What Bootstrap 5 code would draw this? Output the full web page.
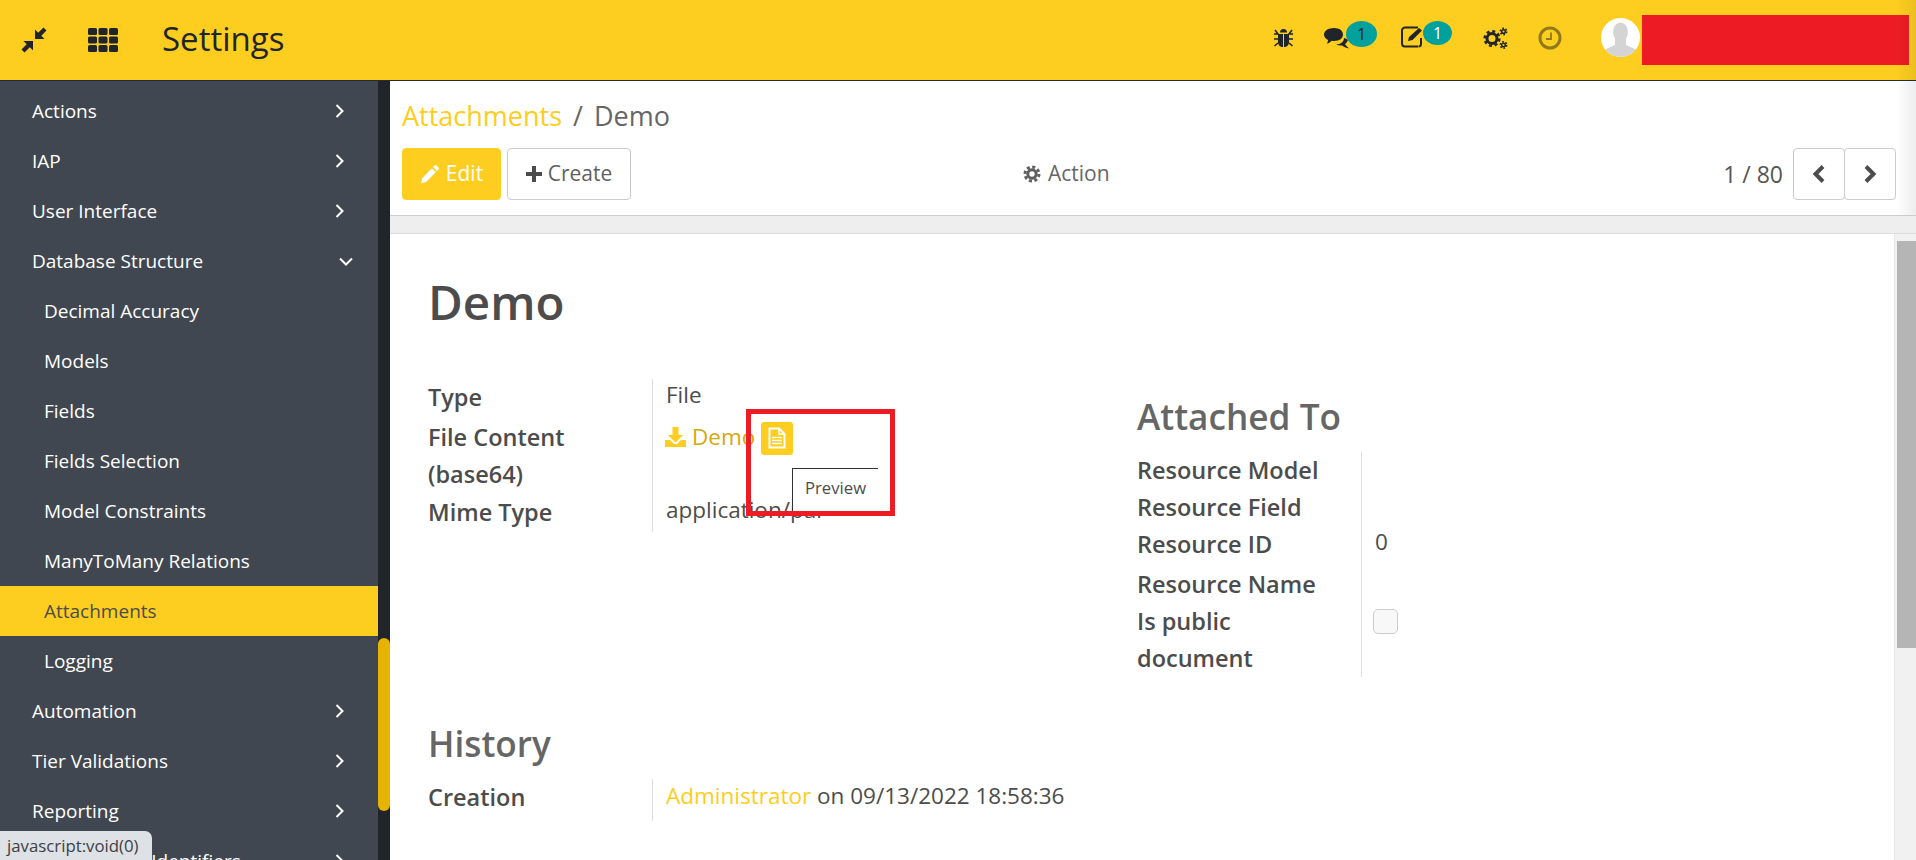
<!DOCTYPE html>
<html lang="en">
<head>
<meta charset="utf-8">
<title>Settings</title>
<link href="https://cdn.jsdelivr.net/npm/bootstrap@5.3.0/dist/css/bootstrap.min.css" rel="stylesheet">
<style>
html,body{height:860px;overflow:hidden}
body{font-family:"Open Sans","Noto Sans",sans-serif;font-size:22.5px;color:#4c4c4c;background:#fff}
.app-shell{position:relative;height:860px;width:1916px;overflow:hidden}
.top-bar{height:81px;background:#fdcd20;border-bottom:1px solid #1f2d3d;color:#212529}
.top-left{padding-left:21px}
.top-title{font-size:33px;line-height:78px;height:80px;margin-left:44px;color:#212529}
.ico-th{margin-left:41px}
.top-right{height:80px;padding-right:7px}
.t-bug{margin-top:28px}
.t-com{margin-top:28px;margin-left:30px;position:relative;width:26px;height:21px}
.t-edt{margin-top:26px;margin-left:51px;position:relative;width:24px;height:22px}
.t-gear{margin-top:27px;margin-left:58px}
.t-clock{margin-top:26px;margin-left:30px}
.t-ava{margin-top:18px;margin-left:39px}
.bub{position:absolute;background:#00a09d;border-radius:50%;color:#212529;font-size:16px;display:flex;align-items:center;justify-content:center}
.bub-a{left:22px;top:-7px;width:31px;height:26px}
.bub-b{left:22px;top:-5px;width:29px;height:24px;color:#fff}
.redact{background:#ed1c24;width:267px;height:50px;margin-left:2px;margin-top:15px}
.avatar-wrap{width:39px;height:39px;display:block}
.body-row{height:779px}
.side-menu{width:378px;background:#414750;padding-top:5px;overflow:hidden;flex:none}
.side-item{height:50px;display:flex;align-items:center;justify-content:space-between;padding-left:32px;padding-right:34px;color:#fff;font-size:19px;text-decoration:none}
.side-item.sub{padding-left:44px}
.side-item.on{background:#fdcd20;color:#4c4c4c}
.chev-d{margin-right:-9px}
.side-track{width:12px;background:#212428;flex:none;position:relative}
.side-thumb{position:absolute;left:0;right:0;top:557px;height:173px;background:#e6b400;border-radius:6px}
.main-col{flex:1;min-width:0}
.ctrl{height:135px;padding:15px 20px 0 12px;border-bottom:1px solid #ccc}
.crumb{font-size:27px;line-height:40px;margin-bottom:12px;color:#666}
.crumb a{color:#fdcd20;text-decoration:none}
.crumb i{font-style:normal;margin:0 4px}
.tb-btn{height:52px;font-size:21px;display:inline-flex;align-items:center;gap:6px;padding:0 14px;border-radius:4px;border:1px solid #ccc;background:#fff;color:#5f5f5f}
.tb-btn.pri{background:#fdcd20;border-color:#fdcd20;color:#fff;width:99px;margin-right:6px;justify-content:center}
.tb-btn.sec{width:124px;justify-content:center}
.tb-left{width:621px}
.tb-act{font-size:21px;color:#666;display:flex;align-items:center;gap:7px}
.pager-txt{font-size:23px;color:#555;margin-right:10px}
.pg-btn{width:52px;padding:0;justify-content:center;color:#4c4c4c}
.pg-btn+.pg-btn{margin-left:-1px}
.band{height:18px;background:#eee;border-bottom:1px solid #ddd}
.sheet-wrap{height:626px;overflow:hidden}
.sheet{flex:1;min-width:0;padding:38px 0 0 38px;border-right:1px solid #e6e6e6}
.doc-title{font-size:47.500px;line-height:60px;font-weight:600;margin:0;color:#4c4c4c}
.cols{margin-top:47px}
.col-a{width:709px;flex:none}
.frm{display:grid;grid-template-columns:225px 1fr}
.lab{font-weight:600;font-size:23.500px;line-height:37px;border-right:1px solid #ddd;color:#4c4c4c;padding-right:20px;padding-bottom:1px}
.lab-file{padding-top:2px}
.frm-tight .lab{line-height:37px;padding-bottom:0}
.frm-tight .lab-name{padding-top:3px}
.lab-last{padding-bottom:5px}
.val{line-height:32px;padding-left:13px;color:#4c4c4c}
.val-hist{padding-top:1px}
.sec-h{font-size:35.200px;line-height:54px;font-weight:600;color:#666;margin:0}
.sec-att{margin-top:10px;margin-bottom:9px}
.val a{color:#d4a90f;text-decoration:none}
.val a.lnk{color:#fdcd20}
.val-file{display:flex;align-items:center;gap:6px;height:37px;margin-top:1px}
.ico-dl{margin-left:-1px}
.prev-btn{width:32px;height:33px;border-radius:3px;background:#fdcd20;display:flex;align-items:center;justify-content:center;margin-top:3px}
.chk-box{width:25px;height:25px;border:1px solid #ccc;border-radius:5px;background:#f8f8f8;margin-top:6px;margin-left:-2px}
.hist{margin-top:39px}
.hist-h{margin-bottom:9px}
.sb-col{width:21px;background:#f1f1f1;position:relative;flex:none}
.sb-arrow{position:absolute;left:4px;top:-8px;width:0;height:0;border-left:6px solid transparent;border-right:6px solid transparent;border-bottom:7px solid #a3a3a3}
.sb-thumb{position:absolute;left:2px;right:0;top:7px;height:407px;background:#b5b5b5}
.tip-box{position:absolute;left:792px;top:468px;width:86px;height:44px;background:#fff;border-top:1px solid #333;border-left:1px solid #333;font-size:16.700px;padding:6px 0 0 12px;color:#4c4c4c;z-index:5}
.annot{position:absolute;left:746px;top:409px;width:149px;height:107px;border:5px solid #ed1c24;z-index:6;pointer-events:none}
.url-tip{position:absolute;left:0;bottom:0;width:152px;height:29px;background:#dee1e6;border-top-right-radius:7px;font-size:16.800px;line-height:30px;padding-left:7px;color:#3c4043;z-index:7;white-space:nowrap}
.edge-fade{position:absolute;right:0;top:0;width:20px;height:215px;background:linear-gradient(90deg,rgba(0,0,0,0),rgba(0,0,0,.07));z-index:4;pointer-events:none}
</style>
</head>
<body>
<div class="app-shell">
  <nav class="top-bar d-flex align-items-center">
    <div class="top-left d-flex align-items-center flex-shrink-0">
      <svg width="26" height="26" viewBox="0 0 26 26" fill="#212529"><path d="M14 12V2.500l3.200 3.200L22.500.5 25.500 3.500 20.300 8.800 23.500 12z"/><path d="M12 14v9.500l-3.200-3.200L3.500 25.500.5 22.500 5.700 17.200 2.500 14z"/></svg>
      <svg class="ico-th" width="30" height="24" viewBox="0 0 30 24" fill="#212529"><rect x="0" y="0" width="9" height="7" rx="1.500"/><rect x="10.500" y="0" width="9" height="7" rx="1.500"/><rect x="21" y="0" width="9" height="7" rx="1.500"/><rect x="0" y="8.500" width="9" height="7" rx="1.500"/><rect x="10.500" y="8.500" width="9" height="7" rx="1.500"/><rect x="21" y="8.500" width="9" height="7" rx="1.500"/><rect x="0" y="17" width="9" height="7" rx="1.500"/><rect x="10.500" y="17" width="9" height="7" rx="1.500"/><rect x="21" y="17" width="9" height="7" rx="1.500"/></svg>
      <span class="top-title">Settings</span>
    </div>
    <div class="top-right ms-auto d-flex align-items-start">
      <svg class="t-bug" width="21" height="20" viewBox="0 0 21 20" fill="#212529" stroke="#212529"><path d="M10.500 1a3.500 3.500 0 0 0-3.500 3.500h7A3.500 3.500 0 0 0 10.500 1z" stroke="none"/><path d="M5 6h5v13c-3 0-5-2-5-5zM11 6h5v8c0 3-2 5-5 5z" stroke="none"/><path d="M2 2l3 4H1M1 11h4M1.500 18L5 15M19 2l-3 4h4M20 11h-4M19.500 18L16 15" fill="none" stroke-width="1.600"/></svg>
      <div class="t-com">
        <svg class="d-block" width="26" height="21" viewBox="0 0 26 21" fill="#212529"><path d="M10 0c5.500 0 9 2.800 9 6.500S15.500 13 10 13c-.8 0-1.600-.1-2.300-.2C6.300 14.500 4.500 15.200 2.700 15.500c.8-1 1.300-2 1.400-3.400C1.600 11 0 9 0 6.500 0 2.800 4.500 0 10 0z"/><path d="M20 10c1 0 3 1 4 2-.6 1.500-1.500 3-3 4 .6 1.300 2.500 3.500 4.500 4.500-3-.3-5.500-1.500-7.500-3-2 .3-4 0-6-1 5 0 8-3 8-6.500z"/></svg>
        <div class="bub bub-a">1</div>
      </div>
      <div class="t-edt">
        <svg class="d-block" width="24" height="22" viewBox="0 0 24 22" fill="none" stroke="#212529" stroke-width="2"><path d="M17 20.500H4a3 3 0 0 1-3-3V4.500a3 3 0 0 1 3-3h13"/><path d="M20 12v6a2.500 2.500 0 0 1-2.500 2.500"/><path d="M7 15l1-4L18 2l3 2.500L11.500 14z" fill="#212529" stroke="none"/></svg>
        <div class="bub bub-b">1</div>
      </div>
      <svg class="t-gear" width="25" height="23" viewBox="0 0 25 23" fill="none" stroke="#212529"><circle cx="9" cy="11.500" r="5" stroke-width="3"/><circle cx="9" cy="11.500" r="7.300" stroke-width="2.600" stroke-dasharray="3 2.730"/><circle cx="20.500" cy="4.500" r="1.800" stroke-width="1.500"/><circle cx="20.500" cy="4.500" r="3.200" stroke-width="1.500" stroke-dasharray="1.700 1.650"/><circle cx="20.500" cy="18" r="1.800" stroke-width="1.500"/><circle cx="20.500" cy="18" r="3.200" stroke-width="1.500" stroke-dasharray="1.700 1.650"/></svg>
      <svg class="t-clock" width="24" height="24" viewBox="0 0 24 24" fill="none" stroke="#907a1c"><circle cx="12" cy="12" r="10" stroke-width="3"/><path d="M13 6.500V13H8" stroke-width="1.800"/></svg>
      <svg class="avatar-wrap t-ava" viewBox="0 0 39 39"><defs><clipPath id="avc"><circle cx="19.500" cy="19.500" r="19.500"/></clipPath></defs><circle cx="19.500" cy="19.500" r="19.500" fill="#fff"/><g clip-path="url(#avc)" fill="#d4d4d4"><ellipse cx="19.500" cy="14" rx="7.500" ry="9.500"/><path d="M14 21h11v6l11 5v8H3v-8l11-5z"/></g></svg>
      <div class="redact"></div>
    </div>
  </nav>

  <div class="body-row d-flex">
    <aside class="side-menu">
      <a class="side-item" href="#"><span>Actions</span><svg width="9" height="14" viewBox="0 0 9 14" fill="none" stroke="#fff" stroke-width="2"><path d="M1.500 1L7.500 7l-6 6"/></svg></a>
      <a class="side-item" href="#"><span>IAP</span><svg width="9" height="14" viewBox="0 0 9 14" fill="none" stroke="#fff" stroke-width="2"><path d="M1.500 1L7.500 7l-6 6"/></svg></a>
      <a class="side-item" href="#"><span>User Interface</span><svg width="9" height="14" viewBox="0 0 9 14" fill="none" stroke="#fff" stroke-width="2"><path d="M1.500 1L7.500 7l-6 6"/></svg></a>
      <a class="side-item" href="#"><span>Database Structure</span><svg class="chev-d" width="14" height="9" viewBox="0 0 14 9" fill="none" stroke="#fff" stroke-width="2"><path d="M1 1.500L7 7.500l6-6"/></svg></a>
      <a class="side-item sub" href="#">Decimal Accuracy</a>
      <a class="side-item sub" href="#">Models</a>
      <a class="side-item sub" href="#">Fields</a>
      <a class="side-item sub" href="#">Fields Selection</a>
      <a class="side-item sub" href="#">Model Constraints</a>
      <a class="side-item sub" href="#">ManyToMany Relations</a>
      <a class="side-item sub on" href="#">Attachments</a>
      <a class="side-item sub" href="#">Logging</a>
      <a class="side-item" href="#"><span>Automation</span><svg width="9" height="14" viewBox="0 0 9 14" fill="none" stroke="#fff" stroke-width="2"><path d="M1.500 1L7.500 7l-6 6"/></svg></a>
      <a class="side-item" href="#"><span>Tier Validations</span><svg width="9" height="14" viewBox="0 0 9 14" fill="none" stroke="#fff" stroke-width="2"><path d="M1.500 1L7.500 7l-6 6"/></svg></a>
      <a class="side-item" href="#"><span>Reporting</span><svg width="9" height="14" viewBox="0 0 9 14" fill="none" stroke="#fff" stroke-width="2"><path d="M1.500 1L7.500 7l-6 6"/></svg></a>
      <a class="side-item" href="#"><span>Sequences &amp; Identifiers</span><svg width="9" height="14" viewBox="0 0 9 14" fill="none" stroke="#fff" stroke-width="2"><path d="M1.500 1L7.500 7l-6 6"/></svg></a>
    </aside>
    <div class="side-track"><div class="side-thumb"></div></div>

    <main class="main-col d-flex flex-column">
      <div class="ctrl">
        <div class="crumb"><a href="#">Attachments</a><i> / </i>Demo</div>
        <div class="d-flex align-items-center">
          <div class="tb-left d-flex">
            <button type="button" class="tb-btn pri"><svg width="20" height="20" viewBox="0 0 20 20" fill="#fff"><path d="M14.500 1.500a1.500 1.500 0 0 1 2 0l2 2a1.500 1.500 0 0 1 0 2l-1.500 1.500-4-4zM11.800 4.200l4 4L6 18l-5 1.500L2 14.500z"/></svg>Edit</button>
            <button type="button" class="tb-btn sec"><svg width="16" height="16" viewBox="0 0 16 16" fill="#4c4c4c"><path d="M6 0h4v6h6v4h-6v6H6v-6H0V6h6z"/></svg>Create</button>
          </div>
          <div class="tb-act"><svg width="18" height="18" viewBox="0 0 18 18" fill="none" stroke="#5f5f5f"><circle cx="9" cy="9" r="4.200" stroke-width="3"/><circle cx="9" cy="9" r="7" stroke-width="3" stroke-dasharray="3 2.500"/></svg>Action</div>
          <div class="ms-auto d-flex align-items-center">
            <span class="pager-txt">1 / 80</span>
            <button type="button" class="tb-btn pg-btn" aria-label="Previous"><svg width="16" height="20" viewBox="0 0 16 20" fill="none" stroke="#4c4c4c" stroke-width="4"><path d="M12 2.500L4.500 10l7.500 7.500"/></svg></button>
            <button type="button" class="tb-btn pg-btn" aria-label="Next"><svg width="16" height="20" viewBox="0 0 16 20" fill="none" stroke="#4c4c4c" stroke-width="4"><path d="M4 2.500l7.500 7.500L4 17.500"/></svg></button>
          </div>
        </div>
      </div>
      <div class="band"></div>
      <div class="sheet-wrap d-flex">
        <div class="sheet">
          <h1 class="doc-title">Demo</h1>
          <div class="cols d-flex">
            <div class="col-a">
              <div class="frm">
                <div class="lab">Type</div><div class="val">File</div>
                <div class="lab lab-file">File Content (base64)</div>
                <div class="val"><div class="val-file">
                  <svg class="ico-dl" width="21" height="20" viewBox="0 0 21 20" fill="#fdcd20"><path d="M7.500 0h6v8H18L10.500 15.500 3 8h4.500z"/><path d="M0 13h5l4 4h3l4-4h5v7H0z"/></svg>
                  <a href="#">Demo</a>
                  <span class="prev-btn"><svg width="18" height="22" viewBox="0 0 18 22" fill="none" stroke="#fff" stroke-width="2"><path d="M1.500 1.500h9.500l5.500 5.500v13.500h-15z"/><path d="M11 1.500V7h5.500" stroke-width="1.500"/><path d="M4 10.500h10M4 13.500h10M4 16.500h10" stroke-width="1.500"/></svg></span>
                </div></div>
                <div class="lab">Mime Type</div><div class="val">application/par</div>
              </div>
            </div>
            <div class="col-b">
              <h2 class="sec-h sec-att">Attached To</h2>
              <div class="frm frm-tight">
                <div class="lab">Resource Model</div><div class="val"></div>
                <div class="lab">Resource Field</div><div class="val"></div>
                <div class="lab">Resource ID</div><div class="val">0</div>
                <div class="lab lab-name">Resource Name</div><div class="val"></div>
                <div class="lab">Is public document</div><div class="val"><div class="chk-box"></div></div>
              </div>
            </div>
          </div>
          <div class="hist">
            <h2 class="sec-h hist-h">History</h2>
            <div class="frm">
              <div class="lab lab-last">Creation</div><div class="val val-hist"><a class="lnk" href="#">Administrator</a> on 09/13/2022 18:58:36</div>
            </div>
          </div>
        </div>
        <div class="sb-col"><div class="sb-arrow"></div><div class="sb-thumb"></div></div>
      </div>
    </main>
  </div>

  <div class="tip-box">Preview</div>
  <div class="annot"></div>
  <div class="edge-fade"></div>
  <div class="url-tip">javascript:void(0)</div>
</div>
<script src="https://cdn.jsdelivr.net/npm/bootstrap@5.3.0/dist/js/bootstrap.bundle.min.js"></script>
</body>
</html>
